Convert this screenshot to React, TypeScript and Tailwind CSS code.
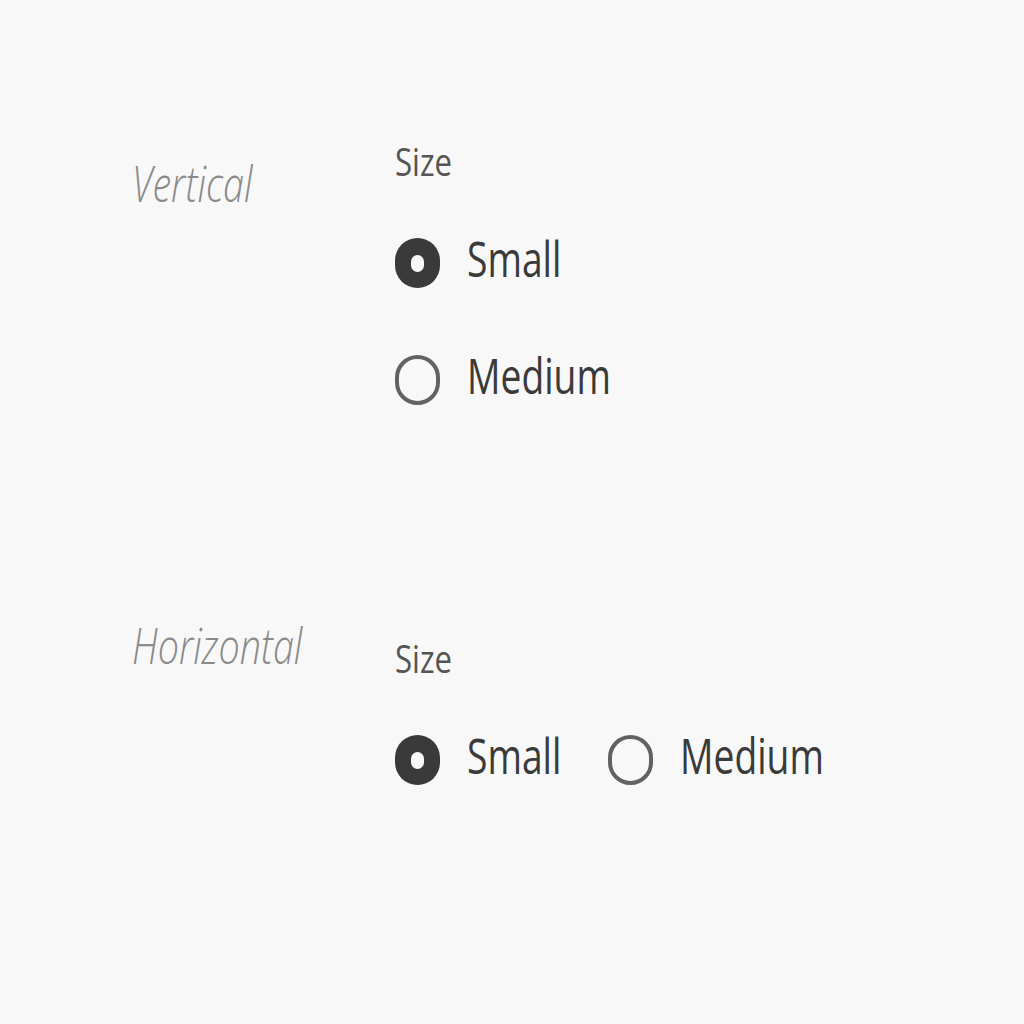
import React from "react";

const font = { fontFamily: '"Open Sans", "Noto Sans", sans-serif' };

function Radio({ checked, label, width }: { checked?: boolean; label: string; width: number }) {
  return (
    <label className="flex items-center h-[50px] cursor-pointer">
      {checked ? (
        <span className="flex w-[45px] h-[50px] shrink-0 items-center justify-center rounded-full bg-[#3a3a3a]">
          <span className="w-[13px] h-[17px] rounded-full bg-[#f8f8f8]" />
        </span>
      ) : (
        <span className="w-[45px] h-[50px] shrink-0 rounded-full border-[4px] border-[#626262] bg-[#f8f8f8]" />
      )}
      <span className="ml-[27px] pb-[10px] whitespace-nowrap" style={{ width }}>
        <span className="inline-block origin-left scale-x-[0.76] text-[49px] leading-none text-[#3a3a3a]">
          {label}
        </span>
      </span>
    </label>
  );
}

function SizeLabel() {
  return (
    <div className="h-[39px] whitespace-nowrap">
      <span className="inline-block origin-left scale-x-[0.8] text-[39px] leading-none text-[#555555]">
        Size
      </span>
    </div>
  );
}

function RowLabel({ children }: { children: string }) {
  return (
    <span className="inline-block origin-left scale-x-[0.77] whitespace-nowrap text-[49px] leading-none italic font-light text-[#8a8a8a]">
      {children}
    </span>
  );
}

export default function App() {
  return (
    <div className="min-h-screen bg-[#f8f8f8] pl-[132px] pt-[141px]" style={font}>
      <section className="flex items-start">
        <div className="w-[263px] mt-[18px]">
          <RowLabel>Vertical</RowLabel>
        </div>
        <div>
          <SizeLabel />
          <div role="radiogroup" className="mt-[58px] flex flex-col gap-[67px]">
            <Radio checked label="Small" width={96} />
            <Radio label="Medium" width={141} />
          </div>
        </div>
      </section>

      <section className="flex items-start mt-[216px]">
        <div className="w-[263px]">
          <RowLabel>Horizontal</RowLabel>
        </div>
        <div className="mt-[17px]">
          <SizeLabel />
          <div role="radiogroup" className="mt-[58px] flex flex-row gap-[45px]">
            <Radio checked label="Small" width={96} />
            <Radio label="Medium" width={141} />
          </div>
        </div>
      </section>
    </div>
  );
}
